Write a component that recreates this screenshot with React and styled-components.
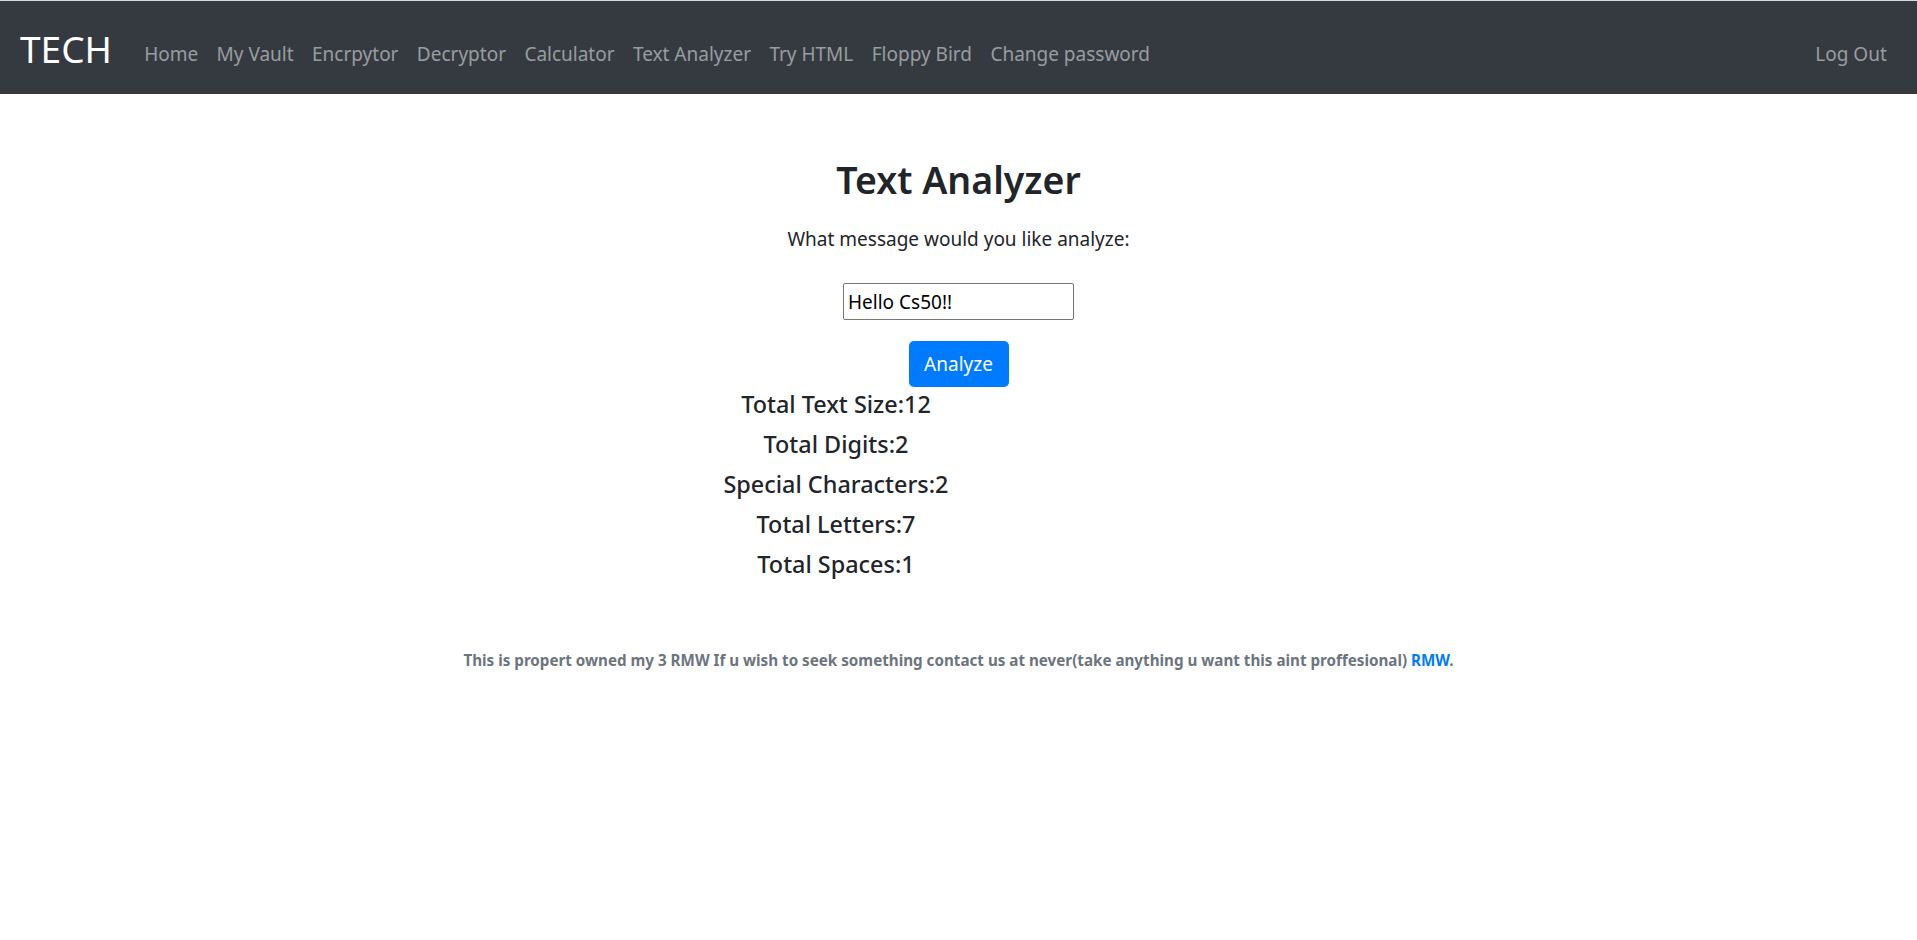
import React, { useState } from "react";
import styled, { createGlobalStyle } from "styled-components";

const GlobalStyle = createGlobalStyle`
  * {
    box-sizing: border-box;
  }
  body {
    margin: 0;
    background: #fff;
    color: #212529;
    font-family: "Noto Sans", "Open Sans", Arial, sans-serif;
  }
`;

const links = [
  "Home",
  "My Vault",
  "Encrpytor",
  "Decryptor",
  "Calculator",
  "Text Analyzer",
  "Try HTML",
  "Floppy Bird",
  "Change password",
];

const analyze = (text) => {
  let digits = 0;
  let letters = 0;
  let spaces = 0;
  let special = 0;
  for (const c of text) {
    if (/[0-9]/.test(c)) digits++;
    else if (/[a-zA-Z]/.test(c)) letters++;
    else if (c === " ") spaces++;
    else special++;
  }
  return [
    ["Total Text Size", text.length],
    ["Total Digits", digits],
    ["Special Characters", special],
    ["Total Letters", letters],
    ["Total Spaces", spaces],
  ];
};

const App = () => {
  const [message, setMessage] = useState("Hello Cs50!!");
  const [result, setResult] = useState(analyze("Hello Cs50!!"));

  return (
    <>
      <GlobalStyle />
      <Navbar>
        <Brand>TECH</Brand>
        <NavList>
          {links.map((l) => (
            <NavLink key={l}>{l}</NavLink>
          ))}
        </NavList>
        <NavLink right>Log Out</NavLink>
      </Navbar>

      <Main>
        <Title>Text Analyzer</Title>
        <Lead>What message would you like analyze:</Lead>
        <Input
          value={message}
          onChange={(e) => {
            setMessage(e.target.value);
          }}
        />
        <Button onClick={() => setResult(analyze(message))}>Analyze</Button>
        <Results>
          {result.map(([label, value]) => (
            <Stat key={label}>
              {label}:{value}
            </Stat>
          ))}
        </Results>
        <Footer>
          This is propert owned my 3 RMW If u wish to seek something contact us
          at never(take anything u want this aint proffesional){" "}
          <a href="#">RMW</a>.
        </Footer>
      </Main>
    </>
  );
};

export default App;

const Navbar = styled.nav`
  display: flex;
  align-items: center;
  height: 94px;
  padding: 0 20px;
  background-color: #343a40;
  border-top: 1px solid #d6d8da;
`;

const Brand = styled.div`
  color: #fff;
  font-size: 37px;
  line-height: 48px;
  margin-right: 23px;
  padding-top: 2px;
`;

const NavList = styled.div`
  display: flex;
  align-items: center;
  flex: 1;
`;

const NavLink = styled.a`
  color: rgba(255, 255, 255, 0.5);
  font-size: 19px;
  line-height: 30px;
  padding: 12px 9.2px 0;
  margin-right: ${({ right }) => (right ? "1px" : "0")};
  cursor: pointer;

  :hover {
    color: rgba(255, 255, 255, 0.75);
  }
`;

const Main = styled.main`
  display: flex;
  flex-direction: column;
  align-items: center;
  padding-top: 62px;
`;

const Title = styled.h2`
  margin: 0 0 20px;
  font-size: 37.5px;
  line-height: 48px;
  font-weight: 600;
  color: #212529;
`;

const Lead = styled.p`
  margin: 0 0 29px;
  font-size: 19px;
  line-height: 30px;
  color: #212529;
`;

const Input = styled.input`
  width: 231px;
  height: 37px;
  margin: 0 0 21px;
  padding: 1px 4px 0;
  border: 1px solid #767676;
  border-radius: 2px;
  font-family: "Noto Sans", sans-serif;
  font-size: 19px;
  color: #000;
  outline: none;
`;

const Button = styled.button`
  width: 100px;
  height: 46px;
  border: none;
  border-radius: 5px;
  background-color: #007bff;
  color: #fff;
  font-family: "Noto Sans", sans-serif;
  font-size: 19px;
  cursor: pointer;

  :hover {
    background-color: #0069d9;
  }
`;

const Results = styled.div`
  display: flex;
  flex-direction: column;
  align-items: center;
  align-self: stretch;
  padding-right: 245px;
  margin-top: 2px;
`;

const Stat = styled.h5`
  margin: 0 0 10px;
  font-size: 23.4px;
  line-height: 30px;
  font-weight: 500;
  color: #212529;
`;

const Footer = styled.p`
  margin: 59px 0 0;
  font-size: 15.2px;
  line-height: 24px;
  font-weight: 700;
  color: #6c757d;

  a {
    color: #007bff;
    text-decoration: none;
  }
`;
